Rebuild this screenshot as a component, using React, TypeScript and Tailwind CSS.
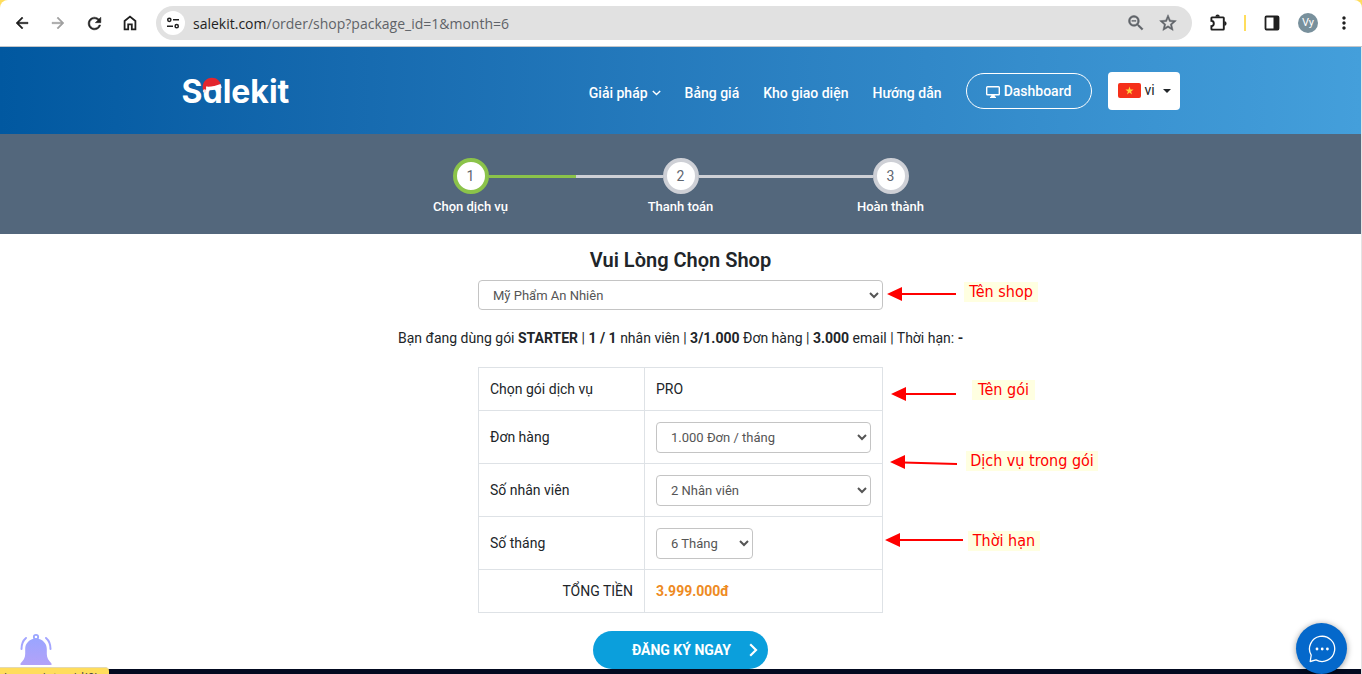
import type { ReactNode } from 'react';
import {
  MdArrowBack,
  MdArrowForward,
  MdMoreVert,
  MdRefresh,
  MdStarBorder,
  MdZoomOut,
} from 'react-icons/md';

interface Step {
  label: string;
  before: string;
  after: string;
  ring: string;
}

const STEPS: Step[] = [
  { label: 'Chọn dịch vụ', before: 'bg-transparent', after: 'bg-[#8bc34a]', ring: 'border-[#8bc34a]' },
  { label: 'Thanh toán', before: 'bg-[#ced0d6]', after: 'bg-[#ced0d6]', ring: 'border-[#ced0d6]' },
  { label: 'Hoàn thành', before: 'bg-[#ced0d6]', after: 'bg-transparent', ring: 'border-[#ced0d6]' },
];

const SELECT =
  'rounded border border-[#c4c4c4] bg-white px-[10px] font-[Roboto] text-[13px] text-[#555555]';

// The first path of every Md icon is an empty box, so only the glyph gets the heavier stroke.
const BOLD_ICON = '[&>path:last-child]:stroke-[0.6]';

function ToolButton({ label, children }: { label: string; children: ReactNode }) {
  return (
    <button aria-label={label} className="flex size-9 shrink-0 items-center justify-center text-[#1f1f1f]">
      {children}
    </button>
  );
}

function BrowserBar() {
  return (
    <div className="bg-[#ffdd5c]">
      <div className="flex h-[47px] items-center rounded-t-lg border-b border-[#c3c6ca] bg-white pl-1">
        <ToolButton label="Back">
          <MdArrowBack size={18} className={BOLD_ICON} />
        </ToolButton>
        <ToolButton label="Forward">
          <MdArrowForward size={18} className={`text-[#a0a0a0] ${BOLD_ICON}`} />
        </ToolButton>
        <ToolButton label="Reload">
          <MdRefresh size={19} className={BOLD_ICON} />
        </ToolButton>
        <ToolButton label="Home">
          <svg width="20" height="20" viewBox="0 0 20 20" fill="none" stroke="currentColor" strokeWidth="1.8">
            <path d="M4.6 16.4V8L10 3.6 15.4 8v8.4h-3.6v-5H8.2v5z" />
          </svg>
        </ToolButton>

        <div className="mx-2 flex h-[34px] min-w-0 flex-1 items-center rounded-full bg-[#e1e1e1] pl-[5px] pr-2">
          <button aria-label="Site information" className="flex size-6 items-center justify-center rounded-full bg-white">
            <svg width="16" height="16" viewBox="0 0 16 16" fill="none" stroke="#1f1f1f" strokeWidth="1.5">
              <circle cx="4.3" cy="4.8" r="1.6" />
              <path d="M8 4.8h6M2 11.2h6" />
              <circle cx="11.7" cy="11.2" r="1.6" />
            </svg>
          </button>
          <div className="ml-2 flex-1 font-['Open_Sans'] text-[14px] text-[#5f6368]">
            <span className="text-[#1f1f1f]">salekit.com</span>/order/shop?package_id=1&amp;month=6
          </div>
          <button aria-label="Zoom" className="flex w-8 justify-center text-[#5f6368]">
            <MdZoomOut size={20} className={BOLD_ICON} />
          </button>
          <button aria-label="Bookmark this page" className="flex w-8 justify-center text-[#5f6368]">
            <MdStarBorder size={20} className={BOLD_ICON} />
          </button>
        </div>

        <ToolButton label="Extensions">
          <svg width="20" height="20" viewBox="0 0 20 20" fill="none" stroke="currentColor" strokeWidth="1.9">
            <path d="M4 4.4h11.2a.6.6 0 0 1 .6.6v11a.6.6 0 0 1-.6.6H4a.6.6 0 0 1-.6-.6v-2.8c3.2-.4 3.2-5 0-5.400V5a.6.6 0 0 1 .6-.6z" />
            <path d="M7.400 3.800a2.200 2.200 0 0 1 4.400 0zM16.400 8.300a2.200 2.200 0 0 1 0 4.400z" fill="currentColor" stroke="none" />
          </svg>
        </ToolButton>
        <div className="mx-2 h-4 w-[2px] bg-[#ffdd5c]" />
        <ToolButton label="Side panel">
          <svg width="16" height="16" viewBox="0 0 16 16">
            <rect x="1.500" y="1.500" width="13" height="13" rx="1" fill="none" stroke="currentColor" strokeWidth="1.8" />
            <path d="M9.500 1.500h5v13h-5z" fill="currentColor" />
          </svg>
        </ToolButton>
        <ToolButton label="Profile">
          <span className="flex size-5 items-center justify-center rounded-full bg-[#78909c] font-[Roboto] text-[11px] text-white">
            Vy
          </span>
        </ToolButton>
        <ToolButton label="Menu">
          <MdMoreVert size={20} />
        </ToolButton>
      </div>
    </div>
  );
}

function Logo() {
  return (
    <a
      href="#"
      className="relative block pt-[3px] font-[Inter] text-[32px] leading-9 font-bold text-white [font-feature-settings:'cv11']"
    >
      Salekit
      {/* santa hat resting on the "a" */}
      <svg className="absolute top-[6px] left-5" width="21" height="17" viewBox="0 0 21 17">
        <path d="M1 13C-.5 7 3 1 10 .8c5 0 8 3.200 9 7.500L5 11l-1.500 3z" fill="#e3262e" />
        <path d="M4 9.500C8 10 14 9 18.500 7l1.200 3.800C15 13 9 13.800 4.200 13z" fill="#fff" />
        <circle cx="2.600" cy="14" r="1.800" fill="#f3dfe2" />
      </svg>
    </a>
  );
}

function SiteHeader() {
  return (
    <header className="bg-linear-to-r from-[#0158a0] to-[#449fdb]">
      <div className="mx-auto flex h-[87px] max-w-[998px] items-center justify-between">
        <Logo />
        <nav className="flex items-center font-[Roboto] text-[14px] font-medium text-white">
          <div className="flex gap-6 pt-[5px]">
            <a href="#" className="flex items-center gap-1">
              Giải pháp
              <svg width="9" height="6" viewBox="0 0 9 6" fill="none" stroke="currentColor" strokeWidth="1.4">
                <path d="M.8.9l3.700 3.600L8.200.9" />
              </svg>
            </a>
            <a href="#">Bảng giá</a>
            <a href="#">Kho giao diện</a>
            <a href="#">Hướng dẫn</a>
          </div>
          <a
            href="#"
            className="ml-6 flex h-9 w-[126px] items-center justify-center gap-1 rounded-full border border-white pt-[2px]"
          >
            <svg width="14" height="12" viewBox="0 0 14 12">
              <rect x=".7" y=".7" width="12.600" height="8" rx=".8" fill="none" stroke="currentColor" strokeWidth="1.4" />
              <path d="M5.500 8.500h3l.5 2.300h1V12H4v-1.200h1z" fill="currentColor" />
            </svg>
            Dashboard
          </a>
          <button className="ml-4 flex h-[38px] w-[72px] items-center rounded bg-white pl-[10px] font-normal text-[#212529]">
            <svg width="23" height="15" viewBox="0 0 23 15">
              <rect width="23" height="15" rx="2" fill="#f5301a" />
              <path d="M11.500 3.500l1 3h3.100l-2.500 1.900.9 3-2.500-1.800L9 11.400l.9-3-2.500-1.900h3.100z" fill="#ffd23f" />
            </svg>
            <span className="ml-1">vi</span>
            <svg className="ml-2" width="8" height="4" viewBox="0 0 8 4">
              <path d="M0 0h8L4 4z" fill="currentColor" />
            </svg>
          </button>
        </nav>
      </div>
    </header>
  );
}

function StepBar() {
  return (
    <div className="h-[100px] bg-[#53677c] pt-6 font-[Roboto]">
      <ol className="mx-auto flex max-w-[630px]">
        {STEPS.map((step, i) => (
          <li key={step.label} className="flex-1">
            <div className="flex items-center">
              <div className={`h-[3px] flex-1 ${step.before}`} />
              <div
                className={`flex size-9 items-center justify-center rounded-full border-4 bg-white text-[14px] text-[#5f6670] ${step.ring}`}
              >
                {i + 1}
              </div>
              <div className={`h-[3px] flex-1 ${step.after}`} />
            </div>
            <div className="pt-[3px] text-center text-[13px] leading-5 font-medium text-white">{step.label}</div>
          </li>
        ))}
      </ol>
    </div>
  );
}

function NoteLabel({ className, children }: { className: string; children: ReactNode }) {
  return (
    <span
      className={`absolute flex h-5 items-center justify-center bg-[#ffffe1] font-['DejaVu_Sans_Condensed','Noto_Sans',sans-serif] text-[16px] whitespace-nowrap text-[#ff0000] ${className}`}
    >
      {children}
    </span>
  );
}

// Red notes that float to the right of the form.
function Notes() {
  return (
    <div className="pointer-events-none absolute inset-0">
      <svg className="absolute top-0 left-[405px]" width="90" height="320" viewBox="883 234 90 320">
        <g stroke="#ff0000" strokeWidth="2">
          <path d="M900 294h56M904 394h52M903 462.400l54 1.600M898 540h65" />
        </g>
        <g fill="#ff0000">
          <path d="M887 294l15-7v14zM891 394l15-7v14zM890 462l15-7v14zM885 540l15-7v14z" />
        </g>
      </svg>
      <NoteLabel className="top-[48px] left-[486px] w-[74px]">Tên shop</NoteLabel>
      <NoteLabel className="top-[146px] left-[494px] w-[63px]">Tên gói</NoteLabel>
      <NoteLabel className="top-[217px] left-[488px] w-[132px]">Dịch vụ trong gói</NoteLabel>
      <NoteLabel className="top-[297px] left-[490px] w-[72px]">Thời hạn</NoteLabel>
    </div>
  );
}

function Row({ height, name, children }: { height: string; name: ReactNode; children: ReactNode }) {
  return (
    <tr className={height}>
      <th scope="row" className="w-[166px] border border-[#dee2e6] px-[11px] text-left font-normal">
        {name}
      </th>
      <td className="border border-[#dee2e6] px-[11px]">{children}</td>
    </tr>
  );
}

function OrderForm() {
  return (
    <main className="relative mx-auto w-[405px] font-[Roboto] text-[14px] text-[#212529]">
      <h1 className="pt-[14px] text-center text-[20px] leading-6 font-semibold">
        <label htmlFor="shop">Vui Lòng Chọn Shop</label>
      </h1>
      <select id="shop" className={`mt-2 block h-[30px] w-full ${SELECT}`}>
        <option>Mỹ Phẩm An Nhiên</option>
      </select>

      <p className="-mx-20 mt-[18px] text-center leading-5 whitespace-nowrap">
        Bạn đang dùng gói <b>STARTER</b> | <b>1 / 1</b> nhân viên | <b>3/1.000</b> Đơn hàng | <b>3.000</b> email | Thời
        hạn: <b>-</b>
      </p>

      <table className="mt-[19px] w-full border-collapse">
        <tbody>
          <Row height="h-[43px]" name="Chọn gói dịch vụ">PRO</Row>
          <Row height="h-[53px]" name={<label htmlFor="orders">Đơn hàng</label>}>
            <select id="orders" className={`block h-[31px] w-full ${SELECT}`}>
              <option>1.000 Đơn / tháng</option>
            </select>
          </Row>
          <Row height="h-[53px]" name={<label htmlFor="staff">Số nhân viên</label>}>
            <select id="staff" className={`block h-[31px] w-full ${SELECT}`}>
              <option>2 Nhân viên</option>
            </select>
          </Row>
          <Row height="h-[53px]" name={<label htmlFor="months">Số tháng</label>}>
            <select id="months" className={`block h-[31px] w-[97px] ${SELECT}`}>
              <option>6 Tháng</option>
            </select>
          </Row>
          <Row height="h-[43px]" name={<span className="block text-right">TỔNG TIỀN</span>}>
            <b className="text-[#ee8a22]">3.999.000đ</b>
          </Row>
        </tbody>
      </table>

      <button className="mx-auto mt-[18px] flex h-[38px] w-[175px] items-center justify-end gap-[18px] rounded-full bg-[#0b9fdc] pr-[10px] font-bold text-white">
        ĐĂNG KÝ NGAY
        <svg width="9" height="14" viewBox="0 0 9 14" fill="none" stroke="currentColor" strokeWidth="2.2">
          <path d="M1.200 1.200L7 7l-5.800 5.800" />
        </svg>
      </button>

      <Notes />
    </main>
  );
}

function BellButton() {
  return (
    <button aria-label="Thông báo" className="fixed bottom-[9px] left-5">
      <svg width="32" height="32" viewBox="0 0 32 32">
        <defs>
          <linearGradient id="bell" x1="0" y1="0" x2="0" y2="1">
            <stop offset="0" stopColor="#9aa5ff" />
            <stop offset="1" stopColor="#b3a2f8" />
          </linearGradient>
        </defs>
        <path
          d="M16 5.500C9 6 5.200 10.500 5.200 16v5c0 4-2 6.500-4.700 9.500V32h31v-1.500c-2.700-3-4.700-5.500-4.700-9.500v-5C26.800 10.500 23 6 16 5.500z"
          fill="url(#bell)"
        />
        <circle cx="16" cy="4" r="2.200" fill="none" stroke="#9aa5ff" strokeWidth="1.800" />
        <path
          d="M6 5C3 7.500 1.500 11 1.500 16M26 5c3 2.500 4.500 6 4.500 11"
          fill="none"
          stroke="#a3a5ff"
          strokeWidth="2"
          strokeLinecap="round"
        />
      </svg>
    </button>
  );
}

function ChatButton() {
  return (
    <button
      aria-label="Chat"
      className="fixed right-[15px] bottom-0 flex size-[51px] items-center justify-center rounded-full bg-[#0468cb] shadow-[0_1px_6px_rgba(0,0,0,0.4)]"
    >
      <svg width="28" height="28" viewBox="0 0 28 28">
        <path
          d="M2.200 26.500l1-6.300A12.600 12.600 0 1 1 8 24.900z"
          fill="none"
          stroke="#fff"
          strokeWidth="1.300"
          strokeLinejoin="round"
        />
        <g fill="#fff">
          <circle cx="9" cy="14" r="1.400" />
          <circle cx="14.200" cy="14" r="1.400" />
          <circle cx="19.400" cy="14" r="1.400" />
        </g>
      </svg>
    </button>
  );
}

export default function App() {
  return (
    <div className="flex min-h-screen flex-col bg-white">
      <BrowserBar />
      <div className="flex flex-1 flex-col border-r border-[#e4e4e4]">
        <SiteHeader />
        <StepBar />
        <OrderForm />
        <footer className="flex-1 bg-[#030a20]" />
      </div>
      <BellButton />
      <ChatButton />
      {/* status bubble, mostly below the fold */}
      <div className="fixed bottom-0 left-0 h-[7px] w-[109px] overflow-hidden rounded-tr border-t border-[#e2d9b4] bg-[#ffdd5c] px-1 pt-[2px] font-['Open_Sans'] text-[12px] leading-4 text-[#3c4043]">
        javascript:void(0)
      </div>
    </div>
  );
}
